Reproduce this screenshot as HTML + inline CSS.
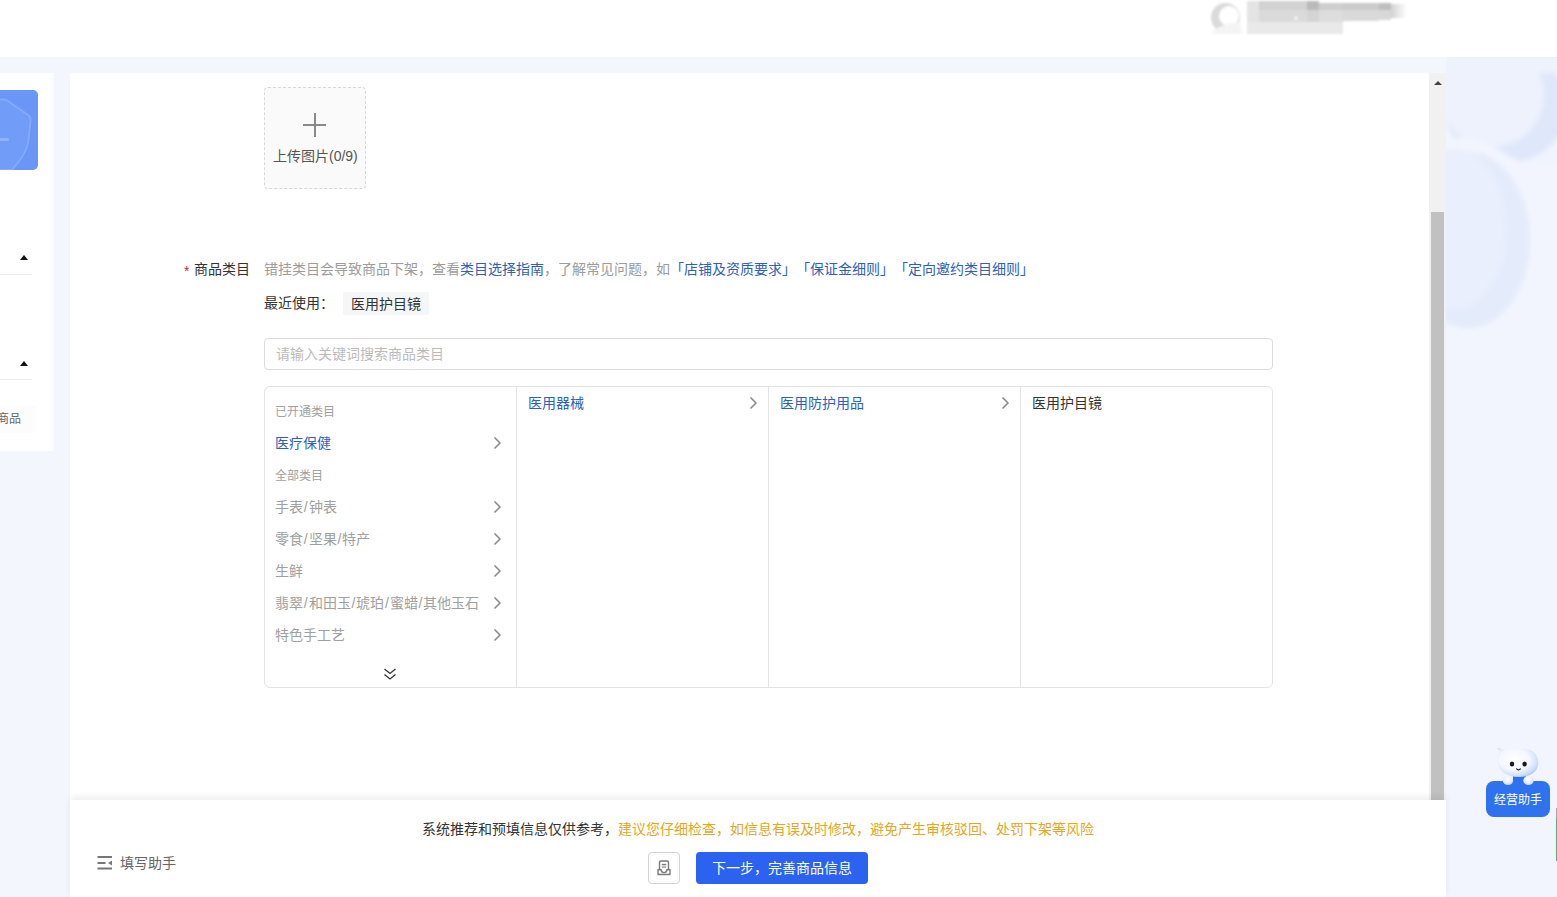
<!DOCTYPE html>
<html lang="zh-CN"><head><meta charset="utf-8">
<style>
*{margin:0;padding:0;box-sizing:border-box}
html,body{width:1557px;height:897px;overflow:hidden}
body{text-spacing-trim:space-all;font-family:"Liberation Sans",sans-serif;background:#f3f6fd;position:relative;color:#333;font-size:14px}
.abs{position:absolute}
#header{left:0;top:0;width:1557px;height:57px;background:#fff}
#side{left:0;top:73px;width:54px;height:378px;background:linear-gradient(90deg,#fff 0 48px,#f9fafe 54px)}
#main{left:70px;top:73px;width:1376px;height:824px;background:#fff}
#sbtrack{left:1429px;top:73px;width:17px;height:727px;background:#f1f1f1}
#sbthumb{left:1431px;top:212px;width:13px;height:588px;background:#c1c1c1}
#upload{left:264px;top:87px;width:102px;height:102px;border:1px dashed #d9d9d9;border-radius:4px;background:#fafafa}
#footer{left:70px;top:800px;width:1376px;height:97px;background:#fff;box-shadow:0 -3px 7px rgba(0,0,0,0.07)}
.t{position:absolute;white-space:nowrap;line-height:1}
#search{left:264px;top:338px;width:1009px;height:32px;border:1px solid #dcdcdc;border-radius:4px}
#panel{left:264px;top:386px;width:1009px;height:302px;border:1px solid #e3e3e3;border-radius:6px}
.col{position:absolute;top:0;bottom:0;border-left:1px solid #e3e3e3}
.it{position:absolute;white-space:nowrap;line-height:1;font-size:14px}
.g{color:#a0a0a0}
.sl{padding:0 .85px}
.b{color:#2d60b8}
svg.ch{position:absolute;overflow:visible}
#btn{left:696px;top:852px;width:172px;height:32px;background:#2b63f0;border-radius:4px}
#iconbtn{left:648px;top:852px;width:32px;height:32px;border:1px solid #d6d6d6;border-radius:4px;background:#fff}
</style></head><body>
<div id="header" class="abs"></div>
<!-- avatar blur -->
<svg class="ch" style="left:1200px;top:0" width="220" height="45">
 <defs><filter id="b2" x="-10%" y="-30%" width="120%" height="160%"><feGaussianBlur stdDeviation="0.9"/></filter>
 <linearGradient id="fd" x1="0" x2="1"><stop offset="0" stop-color="#d2d2d2"/><stop offset="1" stop-color="#fff"/></linearGradient></defs>
 <g filter="url(#b2)">
  <circle cx="25.5" cy="17.5" r="14.5" fill="#dadada"/>
  <circle cx="29" cy="16" r="10" fill="#fff"/>
  <path d="M14 30 Q22 24 40 22 L42 34 L12 34 Z" fill="#f4f4f4"/>
  <rect x="47" y="1" width="12" height="21" fill="#e4e4e4"/>
  <rect x="59" y="1" width="48" height="9" fill="#d2d2d2"/>
  <rect x="59" y="10" width="48" height="12" fill="#dadada"/>
  <rect x="107" y="1" width="12" height="9" fill="#bababa"/>
  <rect x="107" y="10" width="12" height="12" fill="#d4d4d4"/>
  <rect x="119" y="3" width="24" height="7" fill="#cecece"/>
  <rect x="119" y="10" width="24" height="12" fill="#dddddd"/>
  <rect x="143" y="3" width="36" height="7" fill="#cbcbcb"/>
  <rect x="143" y="10" width="36" height="11" fill="#d9d9d9"/>
  <rect x="179" y="3" width="12" height="7" fill="#bfbfbf"/>
  <rect x="179" y="10" width="12" height="10" fill="#d8d8d8"/>
  <rect x="191" y="4" width="16" height="14" fill="url(#fd)"/>
  <rect x="47" y="22" width="96" height="12" fill="#e9e9e9"/>
  <circle cx="96" cy="18" r="1.5" fill="#fff"/>
 </g>
</svg>
<!-- right decoration -->
<svg class="ch" style="left:1446px;top:57px;overflow:hidden" width="111" height="840">
 <defs><filter id="bl" x="-20%" y="-20%" width="140%" height="140%"><feGaussianBlur stdDeviation="2.5"/></filter></defs>
 <rect width="111" height="840" fill="#f2f5fe"/>
 <g filter="url(#bl)">
  <rect x="-10" y="0" width="130" height="120" fill="#f0f4fd"/>
  <ellipse cx="60" cy="50" rx="62" ry="56" fill="#dfe7fa"/>
  <ellipse cx="46" cy="38" rx="52" ry="52" fill="#edf2fd"/>
  <path d="M-10 86 C15 76 35 82 58 96 C80 110 100 112 120 104 V840 H-10 Z" fill="#f2f5fe"/>
  <ellipse cx="22" cy="183" rx="62" ry="88" fill="#e4ebfb"/>
  <ellipse cx="8" cy="172" rx="52" ry="80" fill="#e9effd"/>
  <rect x="-10" y="-10" width="130" height="26" fill="#eef2fc"/>
 </g>
</svg>
<div id="side" class="abs"></div>
<div class="abs" style="left:0;top:90px;width:38px;height:80px;background:#6a96f8;border-radius:0 5px 5px 0;overflow:hidden">
 <svg width="38" height="80" style="position:absolute;left:0;top:0"><path d="M-8 10 L3 9.5 Q6 9.5 8 11 L28 25 Q31 27 30.5 31 L28.5 50 Q27.5 60 20 70 L12 80 L-8 80 Z" fill="#719cf8" stroke="#84aafa" stroke-width="1.8" stroke-linejoin="round"/><path d="M-2 49.5 H7.5" stroke="#90b3fb" stroke-width="3" stroke-linecap="round"/></svg>
</div>
<div class="abs" style="left:20px;top:255px;width:0;height:0;border-left:4px solid transparent;border-right:4px solid transparent;border-bottom:5px solid #111"></div>
<div class="abs" style="left:0;top:274px;width:32px;height:1px;background:#ececec"></div>
<div class="abs" style="left:20px;top:361px;width:0;height:0;border-left:4px solid transparent;border-right:4px solid transparent;border-bottom:5px solid #111"></div>
<div class="abs" style="left:0;top:379px;width:32px;height:1px;background:#ececec"></div>
<div class="abs" style="left:0;top:406px;width:35px;height:27px;background:#fcfcfc"></div>
<div class="t" style="left:-3px;top:413px;font-size:12px;color:#666">商品</div>

<div id="main" class="abs"></div>
<div id="sbtrack" class="abs"></div>
<div id="sbthumb" class="abs"></div>
<div class="abs" style="left:1434px;top:81px;width:0;height:0;border-left:4px solid transparent;border-right:4px solid transparent;border-bottom:4.5px solid #444"></div>

<div id="upload" class="abs"></div>
<div class="abs" style="left:303px;top:124px;width:23px;height:2px;background:#8a8a8a"></div>
<div class="abs" style="left:314px;top:113px;width:2px;height:24px;background:#8a8a8a"></div>
<div class="t" style="left:273px;top:149px;font-size:14px;color:#555">上传图片(0/9)</div>

<div class="t" style="left:184px;top:264px;color:#b8304a">*</div>
<div class="t" style="left:194px;top:262px;color:#333">商品类目</div>
<div class="t" style="left:264px;top:262px;color:#9c9c9c">错挂类目会导致商品下架，查看<span style="color:#2d60b8">类目选择指南</span>，了解常见问题，如<span style="color:#2d60b8">「店铺及资质要求」「保证金细则」「定向邀约类目细则」</span></div>
<div class="t" style="left:264px;top:296px;color:#333">最近使用：</div>
<div class="abs" style="left:343px;top:292px;width:86px;height:23px;background:#f5f6f8;border-radius:2px"></div>
<div class="t" style="left:351px;top:297px;color:#333">医用护目镜</div>
<div id="search" class="abs"></div>
<div class="t" style="left:276px;top:347px;color:#bbb">请输入关键词搜索商品类目</div>

<div id="panel" class="abs">
 <div class="col" style="left:251px"></div>
 <div class="col" style="left:503px"></div>
 <div class="col" style="left:755px"></div>
</div>
<div class="it g" style="left:275px;top:406px;font-size:12px">已开通类目</div>
<div class="it b" style="left:275px;top:436px">医疗保健</div>
<div class="it g" style="left:275px;top:470px;font-size:12px">全部类目</div>
<div class="it g" style="left:275px;top:500px">手表<span class="sl">/</span>钟表</div>
<div class="it g" style="left:275px;top:532px">零食<span class="sl">/</span>坚果<span class="sl">/</span>特产</div>
<div class="it g" style="left:275px;top:564px">生鲜</div>
<div class="it g" style="left:275px;top:596px">翡翠<span class="sl">/</span>和田玉<span class="sl">/</span>琥珀<span class="sl">/</span>蜜蜡<span class="sl">/</span>其他玉石</div>
<div class="it g" style="left:275px;top:628px">特色手工艺</div>
<div class="it b" style="left:528px;top:396px">医用器械</div>
<div class="it b" style="left:780px;top:396px">医用防护用品</div>
<div class="it" style="left:1032px;top:396px;color:#333">医用护目镜</div>
<svg class="ch" style="left:0;top:0" width="1557" height="897">
 <g fill="none" stroke="#888" stroke-width="1.5">
  <path d="M494.5 437.5 L500 443 L494.5 448.5"/>
  <path d="M494.5 501.5 L500 507 L494.5 512.5"/>
  <path d="M494.5 533.5 L500 539 L494.5 544.5"/>
  <path d="M494.5 565.5 L500 571 L494.5 576.5"/>
  <path d="M494.5 597.5 L500 603 L494.5 608.5"/>
  <path d="M494.5 629.5 L500 635 L494.5 640.5"/>
  <path d="M750.5 397.5 L756 403 L750.5 408.5"/>
  <path d="M1002.5 397.5 L1008 403 L1002.5 408.5"/>
 </g>
 <g fill="none" stroke="#333" stroke-width="1.3">
  <path d="M384.5 669 L390 673.5 L395.5 669"/>
  <path d="M384.5 674.5 L390 679 L395.5 674.5"/>
 </g>
</svg>

<div id="footer" class="abs"></div>
<div class="t" style="left:422px;top:822px;color:#333">系统推荐和预填信息仅供参考，<span style="color:#e5a622">建议您仔细检查，如信息有误及时修改，避免产生审核驳回、处罚下架等风险</span></div>
<div id="iconbtn" class="abs"></div>
<svg class="ch" style="left:648px;top:852px" width="32" height="32">
 <g fill="none" stroke="#7a7a7a" stroke-width="1.4" stroke-linejoin="round">
  <path d="M11.5 17.5 V10.5 a1.5 1.5 0 0 1 1.5 -1.5 h6 a1.5 1.5 0 0 1 1.5 1.5 V17.5"/>
  <path d="M10 17.8 h3.2 a2.8 2.8 0 0 0 5.6 0 h3.2 V22.5 h-12 Z"/>
  <path d="M13.8 12.6 h4.4"/>
 </g>
 <path d="M13.8 14.3 h4.4 v1.6 h-4.4z" fill="#aaa"/>
</svg>
<div id="btn" class="abs"></div>
<div class="t" style="left:712px;top:861px;color:#fff">下一步，完善商品信息</div>
<svg class="ch" style="left:96px;top:855px" width="20" height="16">
 <g fill="#777">
  <rect x="1.5" y="1" width="14.5" height="2"/>
  <rect x="1.5" y="7" width="8" height="2"/>
  <path d="M12 8 L16 5.5 V10.5 Z"/>
  <rect x="1.5" y="12.5" width="14.5" height="2"/>
 </g>
</svg>
<div class="t" style="left:120px;top:856px;color:#666">填写助手</div>

<!-- assistant -->
<div class="abs" style="left:1486px;top:781px;width:64px;height:36px;background:#2f72f0;border-radius:8px"></div>
<div class="t" style="left:1494px;top:794px;font-size:12px;color:#fff">经营助手</div>
<svg class="ch" style="left:1480px;top:740px" width="77" height="50">
 <defs>
  <radialGradient id="hd" cx="0.42" cy="0.4" r="0.65"><stop offset="0" stop-color="#ffffff"/><stop offset="0.55" stop-color="#f4f7fe"/><stop offset="0.85" stop-color="#d3e0fa"/><stop offset="1" stop-color="#b3c8f3"/></radialGradient>
  <radialGradient id="pw" cx="0.45" cy="0.35" r="0.7"><stop offset="0" stop-color="#ffffff"/><stop offset="0.6" stop-color="#e6eefc"/><stop offset="1" stop-color="#b7cbf4"/></radialGradient>
 </defs>
 <path d="M33 34 h13 v8 h-13z" fill="#2f6ff0"/>
 <path d="M18 24 C17 18 18 14 20 12 C19 10 17 9 17 8 C20 8 23 9 25 10 C31 8 43 8 50 10 C57 13 59 19 58 25 C57 32 51 37 39 37 C27 37 19 31 18 24 Z" fill="url(#hd)"/>
 <ellipse cx="32" cy="24" rx="2.2" ry="2.6" fill="#1a1a1a"/>
 <ellipse cx="44.6" cy="24" rx="2.2" ry="2.6" fill="#1a1a1a"/>
 <path d="M36.3 28.6 q2.2 2.4 4.4 0" fill="none" stroke="#1a1a1a" stroke-width="1.2"/>
 <ellipse cx="28" cy="40.5" rx="5.2" ry="4.6" fill="url(#pw)"/>
 <ellipse cx="48.5" cy="40.5" rx="5.2" ry="4.6" fill="url(#pw)"/>
</svg>
<div class="abs" style="left:1556px;top:808px;width:1px;height:10px;background:#aaa"></div>
<div class="abs" style="left:1556px;top:818px;width:1px;height:43px;background:#3cb878"></div>
</body></html>
